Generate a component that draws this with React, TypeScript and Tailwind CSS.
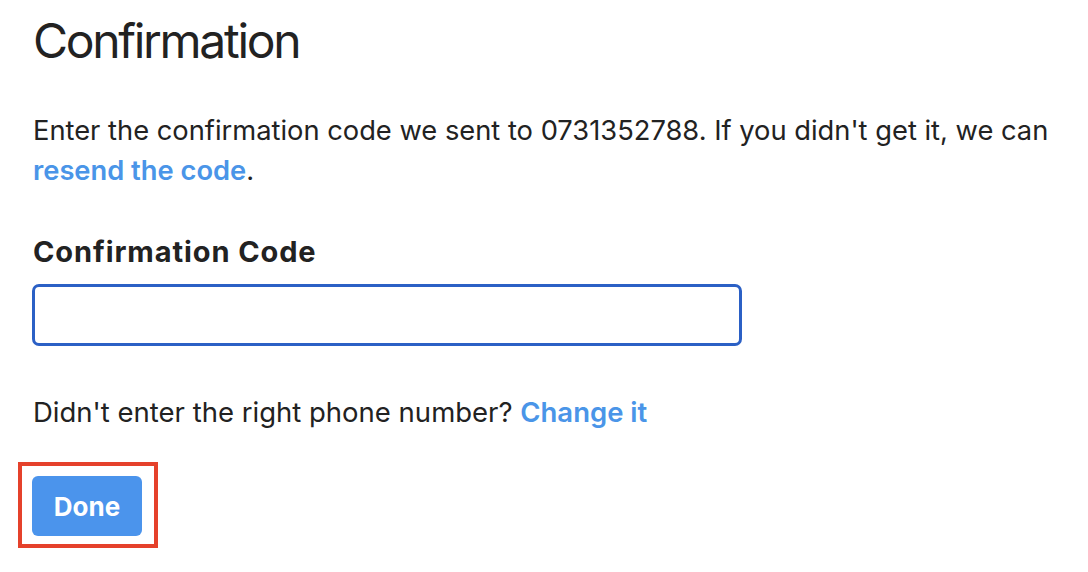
import React from "react";

export default function App() {
  return (
    <div className="w-[1088px] h-[572px] bg-white text-[#222222] overflow-hidden" style={{ fontFamily: "Inter, 'Liberation Sans', sans-serif" }}>
      <div className="pl-[33px] pt-[17px]">
        <h1 className="text-[48px] leading-[48px] font-normal tracking-[-2.3px]">Confirmation</h1>
        <p className="mt-[46px] text-[27.3px] leading-[40px]">
          Enter the confirmation code we sent to 0731352788. If you didn't get it, we can
          <br />
          <a className="text-[#4a95e8] font-semibold">resend the code</a>.
        </p>
        <div className="mt-[43px] text-[29px] leading-[36px] font-bold tracking-[0.9px]">Confirmation Code</div>
        <input className="mt-[14px] -ml-[1px] block w-[710px] h-[62px] rounded-[7px] border-[3px] border-[#2b60c5] outline-none" />
        <p className="mt-[46px] text-[27.5px] leading-[40px]">
          Didn't enter the right phone number? <a className="text-[#4a95e8] font-semibold">Change it</a>
        </p>
        <div className="mt-[30px] -ml-[15px] w-[140px] h-[86px] border-[4px] border-[#e5412b] pl-[10px] pt-[10px]">
          <button className="w-[110px] h-[60px] rounded-[6px] bg-[#4b94ec] text-white font-bold text-[26px]">Done</button>
        </div>
      </div>
    </div>
  );
}
